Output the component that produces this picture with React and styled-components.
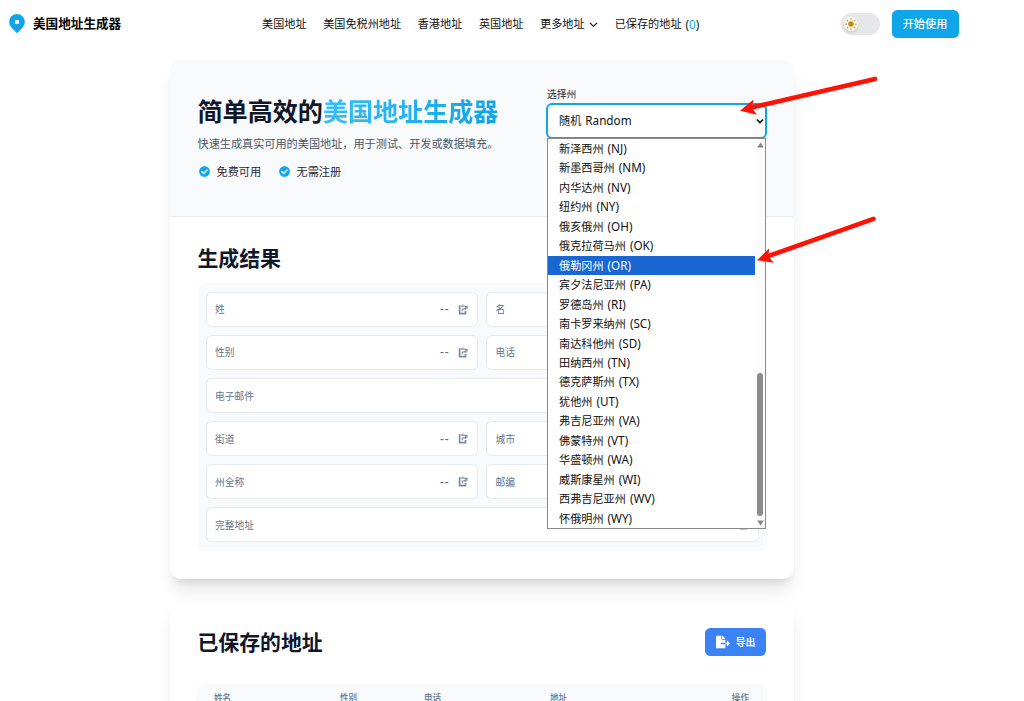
import React from "react";
import styled, { createGlobalStyle, css } from "styled-components";
import { FaFileExport, FaCheckCircle } from "react-icons/fa";

const GlobalStyle = createGlobalStyle`
  *, *::before, *::after { box-sizing: border-box; }
  html, body { margin: 0; background: #fff; overflow: hidden; }
  body {
    height: 701px;
    font-family: "Noto Sans", "Noto Sans CJK SC", sans-serif;
    font-size: 11.15px;
    line-height: 16px;
    color: #1f2937;
  }
  h1, h2, p, ul { margin: 0; padding: 0; }
`;

const Page = styled.div`
  position: relative;
  width: 1024px;
  height: 701px;
  overflow: hidden;
`;

const Header = styled.header`
  width: 964px;
  height: 48px;
  padding: 0 5.5px 0 9px;
  display: grid;
  grid-template-columns: 253px 1fr auto;
  align-items: center;
`;

const Brand = styled.div`
  display: flex;
  align-items: center;
  gap: 8px;
  font-size: 12.6px;
  font-weight: 700;
  color: #000;
  white-space: nowrap;
  svg { display: block; flex: none; }
`;

const Nav = styled.nav`
  display: flex;
  gap: 16.6px;
  color: #111;
  white-space: nowrap;
`;

const NavItem = styled.span`
  display: flex;
  align-items: center;
  white-space: pre;
  svg { margin-left: 4.5px; }
`;

const Latin = styled.span`
  font-size: 11.7px;
  margin-left: 1px;
`;

const Count = styled.span`
  color: #0ea5e9;
`;

const Actions = styled.div`
  display: flex;
  align-items: center;
  gap: 11.5px;
`;

const Toggle = styled.div`
  width: 39px;
  height: 22px;
  padding: 3.5px 2.5px;
  border-radius: 11px;
  background: #e5e7eb;
`;

const Knob = styled.div`
  width: 14.5px;
  height: 14.5px;
  display: grid;
  place-items: center;
  border-radius: 50%;
  background: #fff;
  box-shadow: 0 2px 3px rgba(0, 0, 0, 0.1);
`;

const Button = styled.button`
  display: flex;
  align-items: center;
  justify-content: center;
  gap: 6px;
  width: ${(p) => p.$width}px;
  height: 28px;
  padding: 0;
  border: 0;
  border-radius: 5.5px;
  color: #fff;
  font: inherit;
  ${(p) =>
    p.$tone === "export"
      ? css`
          background: #3b82f6;
          font-size: 9.8px;
          font-weight: 700;
          line-height: 18px;
        `
      : css`
          background: #0ea5e9;
          font-weight: 500;
        `}
`;

const ButtonText = styled.span`
  padding-top: 1px;
`;

const Main = styled.main`
  width: 964px;
  padding-top: 12px;
  display: flex;
  flex-direction: column;
  align-items: center;
  gap: 21px;
`;

const Card = styled.section`
  position: relative;
  z-index: ${(p) => (p.$raised ? 1 : 0)};
  width: 624px;
  background: #fff;
  border-radius: 11px;
  box-shadow: 0 14px 17px -3.5px rgba(0, 0, 0, 0.1),
    0 5.5px 7px -4px rgba(0, 0, 0, 0.1);
`;

const Hero = styled.div`
  height: 157px;
  padding: 28px 27px 0 27.5px;
  display: flex;
  justify-content: space-between;
  background: #f8fafc;
  border-bottom: 1px solid #e9edf2;
  border-radius: 11px 11px 0 0;
`;

const Title = styled.h1`
  margin-top: 6px;
  font-size: 25.08px;
  line-height: 35px;
  font-weight: 700;
  color: #0f172a;
  white-space: nowrap;
`;

const Accent = styled.span`
  background: linear-gradient(to right, #38bdf8, #0ea5e9);
  -webkit-background-clip: text;
  background-clip: text;
  color: transparent;
`;

const Lead = styled.p`
  margin-top: 7px;
  color: #4b5563;
`;

const Features = styled.div`
  display: flex;
  gap: 18px;
  margin: 12px 0 0 1.5px;
`;

const Feature = styled.span`
  display: flex;
  align-items: center;
  gap: 6.5px;
  color: #1f2937;
  svg { color: #0ea5e9; margin-top: -1px; }
`;

const Picker = styled.div`
  position: relative;
  width: 221px;
`;

const PickerLabel = styled.div`
  height: 15px;
  padding-left: 1px;
  font-size: 9.8px;
  line-height: 14px;
`;

const SelectBox = styled.div`
  height: 35.5px;
  display: flex;
  align-items: center;
  justify-content: space-between;
  padding: 0 1.5px 0 11px;
  border: 2px solid #0ea5e9;
  border-radius: 6px;
  background: #fff;
  color: #111;
`;

const Menu = styled.div`
  position: absolute;
  z-index: 2;
  top: 50px;
  left: 1px;
  width: 219px;
  height: 391px;
  display: flex;
  border: 1px solid #8a8a8a;
  background: #fff;
`;

const Options = styled.ul`
  flex: 1;
  list-style: none;
`;

const Option = styled.li`
  height: 19.46px;
  padding-left: 11px;
  line-height: 19.46px;
  white-space: nowrap;
  color: ${(p) => (p.$active ? "#fff" : "#111")};
  background: ${(p) => (p.$active ? "#1967d2" : "#fff")};
`;

const ScrollTrack = styled.div`
  width: 10px;
  display: flex;
  flex-direction: column;
  align-items: center;
  justify-content: space-between;
  padding: 3px 0 2px;
  background: #fcfcfc;
`;

const ScrollThumb = styled.div`
  width: 6.5px;
  height: 143px;
  margin: auto 0 4px;
  border-radius: 4px;
  background: #8b8b8b;
`;

const Results = styled.div`
  height: 362px;
  padding: 23px 27px 0 27.5px;
`;

const Heading = styled.h2`
  font-size: 20.87px;
  line-height: 36px;
  font-weight: 700;
  color: #0f172a;
`;

const FieldGrid = styled.div`
  margin-top: 7px;
  padding: 9px 8.5px;
  display: grid;
  grid-template-columns: 1fr 1fr;
  grid-auto-rows: 34.8px;
  gap: 8.3px;
  border-radius: 6px;
  background: #f8fafc;
`;

const Field = styled.div`
  grid-column: span ${(p) => (p.$wide ? 2 : 1)};
  display: flex;
  align-items: center;
  justify-content: space-between;
  padding: 0 9px 0 8px;
  border: 1px solid #e7ebf0;
  border-radius: 5.5px;
  background: #fff;
  font-size: 9.75px;
  color: #64748b;
`;

const FieldLabel = styled.span`
  padding-top: 2px;
`;

const FieldValue = styled.span`
  display: flex;
  align-items: center;
  gap: 8.5px;
  font-size: 12px;
  font-weight: 500;
  letter-spacing: 1px;
  svg { display: block; }
`;

const SavedHead = styled.div`
  height: 84px;
  padding: 28px 28px 0 27.5px;
  display: flex;
  justify-content: space-between;
`;

const SavedTitle = styled(Heading)`
  line-height: 29px;
`;

const TableHead = styled.div`
  height: 60px;
  margin: 0 27px;
  padding: 6px 18px 6px 17px;
  display: grid;
  grid-template-columns: 126px 84px 126px 1fr auto;
  border-radius: 8px;
  background: #f8fafc;
  color: #64748b;
  font-size: 8.6px;
  font-weight: 500;
`;

const Overlay = styled.svg`
  position: absolute;
  inset: 0;
  z-index: 5;
  pointer-events: none;
`;

const PinIcon = () => (
  <svg width="16" height="20" viewBox="0 0 16 20">
    <path d="M8 0a7.8 7.8 0 0 0-7.8 7.8c0 3.1 1.4 4.9 3.1 6.6L8 19.3l4.7-4.9c1.7-1.7 3.1-3.5 3.1-6.6A7.8 7.8 0 0 0 8 0Z" fill="#0ea5e9" />
    <circle cx="8" cy="8" r="2.3" fill="#fff" />
  </svg>
);

const SunIcon = () => (
  <svg width="12" height="12" viewBox="0 0 12 12" fill="none" stroke="#ca8a04" strokeWidth="1.25">
    <circle cx="6" cy="6" r="2.8" fill="#ca8a04" stroke="none" />
    <path d="M6 .3v1.5M6 10.2v1.5M.3 6h1.5M10.2 6h1.5M1.9 1.9 3 3M9 9l1.1 1.1M10.1 1.9 9 3M3 9l-1.1 1.1" />
  </svg>
);

const Chevron = ({ size = 9, weight = 1.2 }) => (
  <svg width={size} height={size} viewBox="0 0 9 9" fill="none" stroke="#111" strokeWidth={weight}>
    <path d="m1 2.8 3.5 3.5L8 2.8" />
  </svg>
);

const CopyIcon = () => (
  <svg width="10" height="11" viewBox="0 0 10 11" fill="none" stroke="#7f8b9d">
    <path d="M2.6 2H1.6v7.6h5.9V7" strokeWidth="1.7" />
    <path d="M2.6 2.9V1.6h1.2V.6h1.8v1h1.2v1.3z" fill="#a3adbb" stroke="none" />
    <path d="M4.3 7.2V5h1.8" strokeWidth="1.2" />
    <path d="M5.6 5 8.4 2v4.2z" fill="#7f8b9d" stroke="none" />
    <path d="M6.8 2.3h2.2v2.5" strokeWidth="1.2" />
  </svg>
);

const Caret = ({ up }) => (
  <svg width="7" height="6" viewBox="0 0 7 6">
    <path d={up ? "M3.5.5 6.8 5.5H.2Z" : "M3.5 5.5.2.5h6.6Z"} fill="#858585" />
  </svg>
);

const states = [
  ["新泽西州", "NJ"], ["新墨西哥州", "NM"], ["内华达州", "NV"], ["纽约州", "NY"],
  ["俄亥俄州", "OH"], ["俄克拉荷马州", "OK"], ["俄勒冈州", "OR"], ["宾夕法尼亚州", "PA"],
  ["罗德岛州", "RI"], ["南卡罗来纳州", "SC"], ["南达科他州", "SD"], ["田纳西州", "TN"],
  ["德克萨斯州", "TX"], ["犹他州", "UT"], ["弗吉尼亚州", "VA"], ["佛蒙特州", "VT"],
  ["华盛顿州", "WA"], ["威斯康星州", "WI"], ["西弗吉尼亚州", "WV"], ["怀俄明州", "WY"],
];

const fields = [
  ["姓"], ["名"], ["性别"], ["电话"], ["电子邮件", true],
  ["街道"], ["城市"], ["州全称"], ["邮编"], ["完整地址", true],
];

export default function App() {
  return (
    <Page>
      <GlobalStyle />
      <Header>
        <Brand><PinIcon />美国地址生成器</Brand>
        <Nav>
          <NavItem>美国地址</NavItem>
          <NavItem>美国免税州地址</NavItem>
          <NavItem>香港地址</NavItem>
          <NavItem>英国地址</NavItem>
          <NavItem>更多地址<Chevron /></NavItem>
          <NavItem>已保存的地址<Latin> (<Count>0</Count>)</Latin></NavItem>
        </Nav>
        <Actions>
          <Toggle><Knob><SunIcon /></Knob></Toggle>
          <Button $width={67}>开始使用</Button>
        </Actions>
      </Header>
      <Main>
        <Card $raised>
          <Hero>
            <div>
              <Title>简单高效的<Accent>美国地址生成器</Accent></Title>
              <Lead>快速生成真实可用的美国地址，用于测试、开发或数据填充。</Lead>
              <Features>
                <Feature><FaCheckCircle size={11} />免费可用</Feature>
                <Feature><FaCheckCircle size={11} />无需注册</Feature>
              </Features>
            </div>
            <Picker>
              <PickerLabel>选择州</PickerLabel>
              <SelectBox>
                <span>随机<Latin> Random</Latin></span>
                <Chevron size={8} weight={1.8} />
              </SelectBox>
              <Menu>
                <Options>
                  {states.map(([name, code]) => (
                    <Option key={code} $active={code === "OR"}>
                      {name}<Latin> ({code})</Latin>
                    </Option>
                  ))}
                </Options>
                <ScrollTrack>
                  <Caret up />
                  <ScrollThumb />
                  <Caret />
                </ScrollTrack>
              </Menu>
            </Picker>
          </Hero>
          <Results>
            <Heading>生成结果</Heading>
            <FieldGrid>
              {fields.map(([label, wide]) => (
                <Field key={label} $wide={wide}>
                  <FieldLabel>{label}</FieldLabel>
                  <FieldValue>--<CopyIcon /></FieldValue>
                </Field>
              ))}
            </FieldGrid>
          </Results>
        </Card>
        <Card>
          <SavedHead>
            <SavedTitle>已保存的地址</SavedTitle>
            <Button $tone="export" $width={61}>
              <FaFileExport size={14} /><ButtonText>导出</ButtonText>
            </Button>
          </SavedHead>
          <TableHead>
            <span>姓名</span><span>性别</span><span>电话</span><span>地址</span><span>操作</span>
          </TableHead>
        </Card>
      </Main>
      <Overlay width="1024" height="701" viewBox="0 0 1024 701">
        <g stroke="#ff1205" strokeWidth="4.6" strokeLinecap="round">
          <path d="M875 78.9 752 107.5" />
          <path d="M873.5 218.8 768 256.2" />
        </g>
        <g fill="#ff1205">
          <path d="m740 110.7 13.6-11.2-1.8 8 5 7.3Z" />
          <path d="m757 260.3 12.3-12-1 8 5.4 6.4Z" />
        </g>
      </Overlay>
    </Page>
  );
}
